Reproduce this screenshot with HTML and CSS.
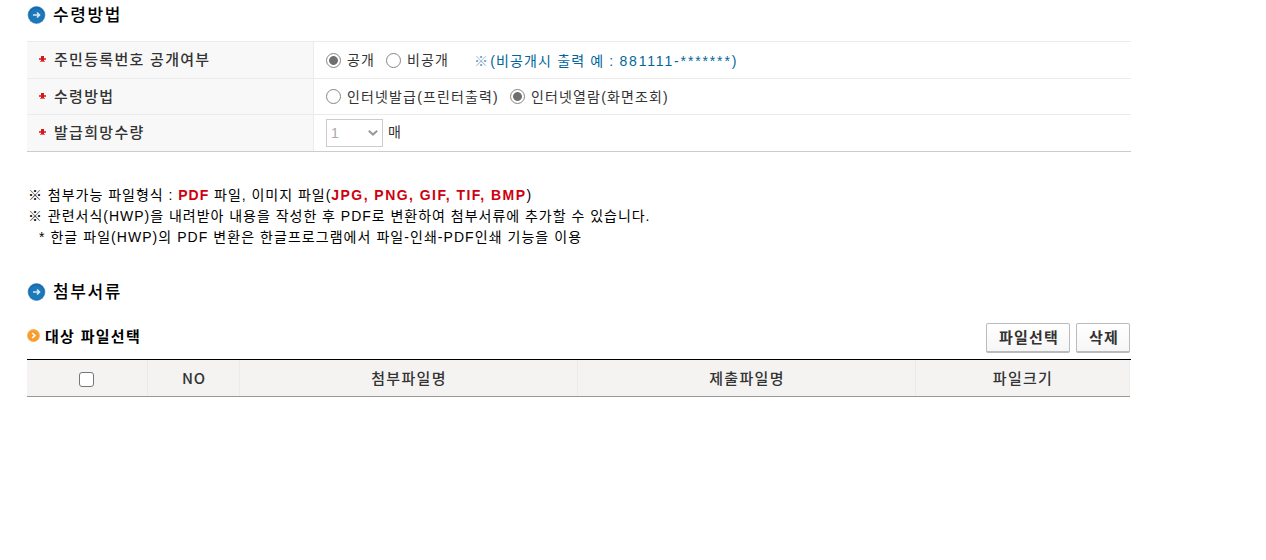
FILE: index.html
```html
<!DOCTYPE html>
<html lang="ko">
<head>
  <meta charset="UTF-8">
  <title>수령방법</title>
  <link rel="stylesheet" href="styles.css">
</head>
<body>
  <div class="content">

    <h2 class="title">
      <svg class="ico" viewBox="0 0 18 18">
        <circle cx="9" cy="9" r="8.9" fill="#6aa5d2"/>
        <circle cx="9" cy="9" r="8.2" fill="#1669a9"/>
        <circle cx="9" cy="9.6" r="7.2" fill="#1c79b9"/>
        <path d="M5.5 9H12M9.5 6.5L12 9L9.5 11.5" fill="none" stroke="#d5e9f5" stroke-width="1.6"/>
      </svg>
      <span>수령방법</span>
    </h2>

    <div class="form">
      <div class="row row1">
        <div class="th"><i class="req"></i><span>주민등록번호 공개여부</span></div>
        <div class="td">
          <input type="radio" name="open" checked><label class="w1">공개</label>
          <input type="radio" name="open"><label class="w2">비공개</label>
          <span class="guide"><i>※</i>(비공개시 출력 예 : <span class="num">881111-*******)</span></span>
        </div>
      </div>
      <div class="row">
        <div class="th"><i class="req"></i><span>수령방법</span></div>
        <div class="td">
          <input type="radio" name="recv"><label class="w3">인터넷발급(프린터출력)</label>
          <input type="radio" name="recv" checked><label>인터넷열람(화면조회)</label>
        </div>
      </div>
      <div class="row row3">
        <div class="th"><i class="req"></i><span>발급희망수량</span></div>
        <div class="td">
          <div class="select">
            <span>1</span>
            <svg width="10" height="6" viewBox="0 0 10 6"><path d="M.8 .8L5 4.6L9.2 .8" fill="none" stroke="#999" stroke-width="2"/></svg>
          </div>
          <label class="unit">매</label>
        </div>
      </div>
    </div>

    <div class="notes">
      <p>※ 첨부가능 파일형식 : <b>PDF</b> 파일, 이미지 파일(<b class="ext">JPG, PNG, GIF, TIF, BMP</b>)</p>
      <p>※ 관련서식(HWP)을 내려받아 내용을 작성한 후 PDF로 변환하여 첨부서류에 추가할 수 있습니다.</p>
      <p class="sub">* 한글 파일(HWP)의 PDF 변환은 한글프로그램에서 파일-인쇄-PDF인쇄 기능을 이용</p>
    </div>

    <h2 class="title title2">
      <svg class="ico" viewBox="0 0 18 18">
        <circle cx="9" cy="9" r="8.9" fill="#6aa5d2"/>
        <circle cx="9" cy="9" r="8.2" fill="#1669a9"/>
        <circle cx="9" cy="9.6" r="7.2" fill="#1c79b9"/>
        <path d="M5.5 9H12M9.5 6.5L12 9L9.5 11.5" fill="none" stroke="#d5e9f5" stroke-width="1.6"/>
      </svg>
      <span>첨부서류</span>
    </h2>

    <div class="bar">
      <h3>
        <svg width="13" height="13" viewBox="0 0 13 13">
          <circle cx="6.5" cy="6.5" r="6.5" fill="#f9b55c"/>
          <circle cx="6.5" cy="6.7" r="5.6" fill="#f79c2e"/>
          <path d="M5.2 4L7.9 6.5L5.2 9" fill="none" stroke="#fff" stroke-width="1.7"/>
        </svg>
        <span>대상 파일선택</span>
      </h3>
      <div class="btns">
        <button class="btn b1">파일선택</button>
        <button class="btn b2">삭제</button>
      </div>
    </div>

    <div class="list">
      <div><input type="checkbox"></div>
      <div class="no">NO</div>
      <div>첨부파일명</div>
      <div>제출파일명</div>
      <div>파일크기</div>
    </div>

  </div>
</body>
</html>
```
FILE: styles.css
```css
* {
  box-sizing: border-box;
}

body {
  margin: 0;
  background: #fff;
  overflow: hidden;
  font-family: "Liberation Sans", "Noto Sans CJK KR", sans-serif;
  font-size: 14px;
  color: #333;
}

h2, h3, p {
  margin: 0;
}

i {
  font-style: normal;
}

.content {
  width: 1104px;
  margin-left: 27px;
}

/* section titles */
.title {
  display: flex;
  align-items: center;
  gap: 7px;
  height: 29px;
  font-size: 17px;
  font-weight: 500;
  line-height: 29px;
  letter-spacing: 1.6px;
  color: #000;
}

.title span {
  padding-top: 2px;
}

.ico {
  width: 19px;
  height: 18px;
}

/* form table */
.form {
  margin-top: 12px;
  border-top: 1px solid #ebebeb;
  border-bottom: 1px solid #ccc;
}

.row {
  display: flex;
  height: 36px;
  border-bottom: 1px solid #ebebeb;
}

.row1 {
  height: 37px;
}

.row3 {
  border-bottom: 0;
}

.th {
  display: flex;
  align-items: center;
  width: 287px;
  padding-left: 12px;
  background: #f8f8f8;
  border-right: 1px solid #ebebeb;
  font-size: 15px;
  font-weight: 500;
  letter-spacing: 1.3px;
}

.th span {
  padding-bottom: 3px;
}

.req {
  width: 7px;
  height: 6px;
  margin: 0 8px 2px 0;
  background: linear-gradient(#d9161c, #d9161c) 2px 0 / 3px 5px no-repeat,
    linear-gradient(#e2484c, #e2484c) 0 2px / 7px 2px no-repeat,
    linear-gradient(#e56a6c, #e56a6c) 1px 5px / 5px 1px no-repeat;
}

.td {
  display: flex;
  align-items: center;
  padding-left: 12px;
  white-space: nowrap;
}

input {
  appearance: none;
  flex: none;
  margin: 0;
  border: 1px solid #767676;
  background: #fff;
}

input[type=radio] {
  width: 15px;
  height: 15px;
  margin-right: -1px;
  border: 1.5px solid #858585;
  border-radius: 50%;
}

input[type=radio]:checked {
  background: radial-gradient(circle, #6f6f6f 4px, #fff 4.8px);
}

label {
  margin-left: 7px;
  padding-bottom: 2px;
  letter-spacing: 1.15px;
}

.w1 {
  width: 39px;
}

.w2 {
  width: 67px;
}

.w3 {
  width: 163px;
}

.guide {
  letter-spacing: 1.15px;
  color: #006699;
}

.guide i {
  margin-right: 1px;
  color: #6d9dc0;
}

.num {
  letter-spacing: 1.85px;
}

.select {
  display: flex;
  align-items: center;
  justify-content: space-between;
  width: 57px;
  height: 28px;
  padding: 0 4px 0 4px;
  border: 1px solid #ccc;
  color: #aaa;
}

.unit {
  margin-left: 5px;
  padding-bottom: 4px;
}

/* notes */
.notes {
  margin-top: 33px;
  padding-left: 1px;
  letter-spacing: .98px;
  color: #000;
}

.notes p {
  height: 21px;
  line-height: 21px;
  white-space: nowrap;
}

.notes b {
  font-weight: 700;
  color: #d0000f;
}

.notes .ext {
  letter-spacing: 1.45px;
}

.notes .sub {
  padding-left: 11px;
  letter-spacing: 1.05px;
}

.title2 {
  margin-top: 29px;
}

/* file list */
.bar {
  display: flex;
  justify-content: space-between;
  height: 53px;
  padding-right: 1px;
}

h3 {
  display: flex;
  align-items: center;
  gap: 5px;
  height: 29px;
  margin-top: 15px;
  font-size: 15px;
  font-weight: 700;
  letter-spacing: 1.3px;
  color: #000;
}

.btns {
  display: flex;
  gap: 6px;
  margin-top: 17px;
}

.btn {
  height: 30px;
  padding: 0 0 3px 2px;
  border: 1px solid #bbb;
  border-bottom-width: 2px;
  border-radius: 2px;
  background: linear-gradient(#fff, #f6f6f6);
  font-family: inherit;
  font-size: 15px;
  font-weight: 700;
  letter-spacing: 1.2px;
  color: #333;
}

.b1 {
  width: 84px;
}

.b2 {
  width: 54px;
}

.list {
  display: grid;
  grid-template-columns: 121px 92px 338px 338px 214px;
  height: 38px;
  border-top: 1px solid #000;
  background: linear-gradient(#999, #999) 0 100% / 1103px 1px no-repeat;
}

.list div {
  display: flex;
  align-items: center;
  justify-content: center;
  height: 36px;
  padding: 0 0 1px 1px;
  background: #f4f3f2;
  border-right: 1px solid #ebebeb;
  font-size: 15px;
  font-weight: 500;
  letter-spacing: 1.3px;
}

.list .no {
  font-family: "Noto Sans CJK KR", sans-serif;
  letter-spacing: .8px;
}

input[type=checkbox] {
  width: 15px;
  height: 15px;
  margin: 3px 2px 0 0;
  border-radius: 3px;
}
```
